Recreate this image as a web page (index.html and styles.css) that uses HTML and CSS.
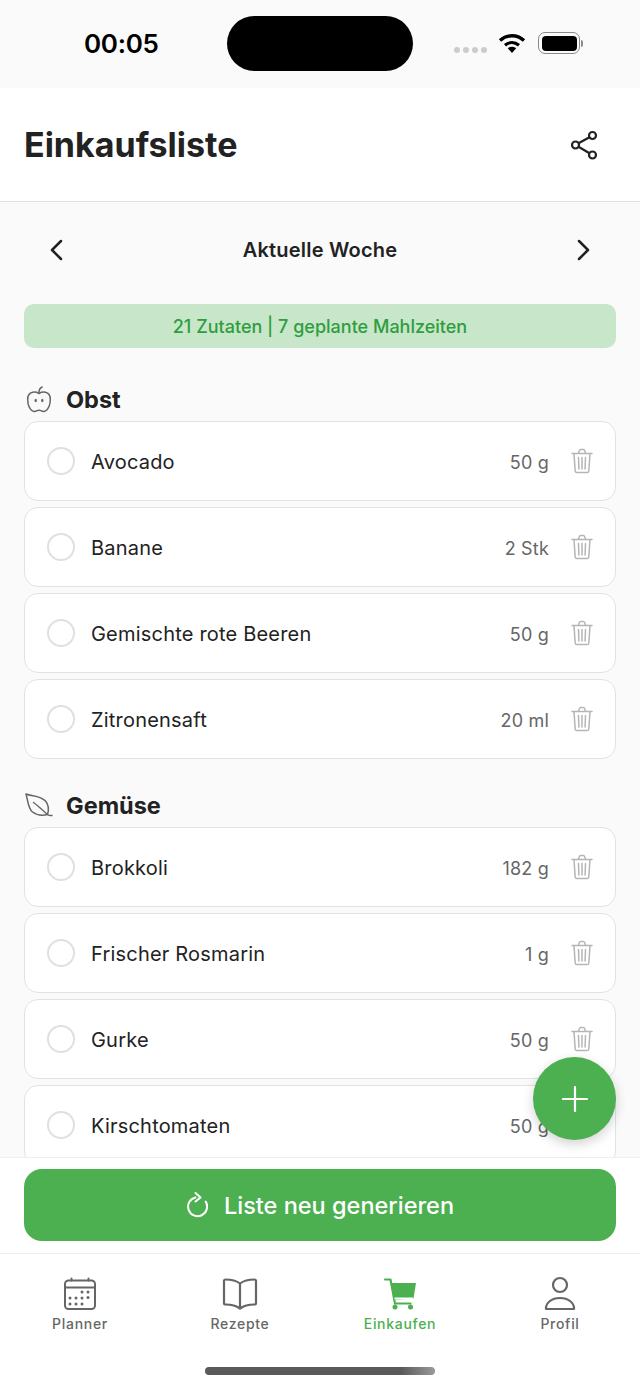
FILE: index.html
```html
<!DOCTYPE html>
<html lang="de">
<head>
<meta charset="utf-8">
<title>Einkaufsliste</title>
<link rel="stylesheet" href="styles.css">
</head>
<body>
<svg class="sprite" aria-hidden="true">
  <symbol id="trash" viewBox="0 0 22 26">
    <path d="M1 5.500h20M7.500 5.200 8.300 2.600c.2-.7.7-1.100 1.400-1.100h2.600c.7 0 1.200.4 1.400 1.100l.8 2.600M3 5.800l1.200 17.200c.1 1 .8 1.600 1.700 1.600h10.200c.9 0 1.600-.6 1.700-1.600L19 5.800M7.500 9.500l.4 11.500M11 9.500V21M14.500 9.500 14.100 21" fill="none" stroke="currentColor" stroke-width="1.500" stroke-linecap="round" stroke-linejoin="round"/>
  </symbol>
</svg>
<div class="app">
  <div class="status">
    <span class="time">00:05</span>
    <span class="island"></span>
    <div class="status-icons">
      <span class="signal"><i></i><i></i><i></i><i></i></span>
      <svg class="wifi" width="28" height="20" viewBox="0 0 28 20">
        <path d="M2 7.500C9 1.200 19 1.200 26 7.500" fill="none" stroke="#000" stroke-width="3.400"/>
        <path d="M7 12.300c4.200-3.600 9.800-3.600 14 0" fill="none" stroke="#000" stroke-width="3.200"/>
        <path d="M9.800 15.200c2.500-2 5.900-2 8.400 0L14 20z" fill="#000"/>
      </svg>
      <span class="battery"><b></b></span><span class="battery-tip"></span>
    </div>
  </div>

  <header class="header">
    <h1>Einkaufsliste</h1>
    <svg width="28" height="30" viewBox="0 0 28 30" class="share">
      <g fill="none" stroke="#222" stroke-width="2.200">
        <circle cx="22.500" cy="5.500" r="3.500"/>
        <circle cx="5.500" cy="15" r="3.500"/>
        <circle cx="22.500" cy="25" r="3.500"/>
        <path d="M8.500 13.300 19.500 7.200M8.500 16.800l11 6.400"/>
      </g>
    </svg>
  </header>

  <main class="content">
    <div class="week">
      <svg width="16" height="24" viewBox="0 0 16 24"><path d="M13 3 4 12l9 9" fill="none" stroke="#222" stroke-width="2.500" stroke-linecap="round" stroke-linejoin="round"/></svg>
      <span>Aktuelle Woche</span>
      <svg width="16" height="24" viewBox="0 0 16 24"><path d="m3 3 9 9-9 9" fill="none" stroke="#222" stroke-width="2.500" stroke-linecap="round" stroke-linejoin="round"/></svg>
    </div>
    <div class="banner">21 Zutaten | 7 geplante Mahlzeiten</div>

    <section class="section">
      <h2 class="section-title">
        <svg class="cat" width="30" height="30" viewBox="0 0 30 30">
          <g fill="none" stroke="#666" stroke-width="1.500" stroke-linecap="round" stroke-linejoin="round">
            <path d="M15 8.500c-2-1.200-4-1.700-6.300-1.200C5.200 8 3.500 11 3.700 15c.2 4.500 1.800 9 4.700 10.800 1.700 1 3.300.6 4.600-.2 1.300-.6 2.700-.6 4 0 1.300.8 2.900 1.200 4.600.2 2.900-1.800 4.500-6.300 4.700-10.800.2-4-1.500-7-5-7.700-2.300-.5-4.300 0-6.300 1.200z"/>
            <path d="M15 7.500c0-2.600 1-4.500 3.200-5.500"/>
          </g>
          <ellipse cx="11.700" cy="15.500" rx="1.200" ry="1.800" fill="#666"/>
          <ellipse cx="18.300" cy="15.500" rx="1.200" ry="1.800" fill="#666"/>
        </svg>
        Obst
      </h2>
      <div class="list">
        <div class="item"><span class="check"></span><span class="name">Avocado</span><span class="qty">50 g</span><svg class="trash" width="22" height="26"><use href="#trash"/></svg></div>
        <div class="item"><span class="check"></span><span class="name">Banane</span><span class="qty">2 Stk</span><svg class="trash" width="22" height="26"><use href="#trash"/></svg></div>
        <div class="item"><span class="check"></span><span class="name">Gemischte rote Beeren</span><span class="qty">50 g</span><svg class="trash" width="22" height="26"><use href="#trash"/></svg></div>
        <div class="item"><span class="check"></span><span class="name">Zitronensaft</span><span class="qty">20 ml</span><svg class="trash" width="22" height="26"><use href="#trash"/></svg></div>
      </div>
    </section>

    <section class="section">
      <h2 class="section-title">
        <svg class="cat" width="30" height="30" viewBox="0 0 30 30">
          <g fill="none" stroke="#666" stroke-width="1.500" stroke-linecap="round" stroke-linejoin="round">
            <path d="M2 3c6 2.500 14 1 19.500 7 3 3.500 3.500 8.500 2 13.500-5.500 1.500-11 .5-15-2.500C4 17.500 4 9.500 2 3z"/>
            <path d="M9.500 11.500c4 3 9 7.500 14 12 1 .8 3 1.200 4.500 1"/>
          </g>
        </svg>
        Gemüse
      </h2>
      <div class="list">
        <div class="item"><span class="check"></span><span class="name">Brokkoli</span><span class="qty">182 g</span><svg class="trash" width="22" height="26"><use href="#trash"/></svg></div>
        <div class="item"><span class="check"></span><span class="name">Frischer Rosmarin</span><span class="qty">1 g</span><svg class="trash" width="22" height="26"><use href="#trash"/></svg></div>
        <div class="item"><span class="check"></span><span class="name">Gurke</span><span class="qty">50 g</span><svg class="trash" width="22" height="26"><use href="#trash"/></svg></div>
        <div class="item"><span class="check"></span><span class="name">Kirschtomaten</span><span class="qty">50 g</span><svg class="trash" width="22" height="26"><use href="#trash"/></svg></div>
      </div>
    </section>
  </main>

  <button class="fab" aria-label="Hinzufügen">
    <svg width="28" height="28" viewBox="0 0 28 28"><path d="M14 2v24M2 14h24" stroke="#fff" stroke-width="2.200" stroke-linecap="round"/></svg>
  </button>

  <div class="action">
    <button class="generate">
      <svg width="22" height="26" viewBox="1 0 22 26"><path d="M15.500 5.200A9.500 9.500 0 1 1 5 8.500" fill="none" stroke="#fff" stroke-width="2" stroke-linecap="round" transform="rotate(40 12 14.500)"/><path d="M10.500 1 15.500 5.500 10.500 9.500" fill="none" stroke="#fff" stroke-width="2" stroke-linecap="round" stroke-linejoin="round"/></svg>
      Liste neu generieren
    </button>
  </div>

  <nav class="tabs">
    <div class="tab">
      <svg width="36" height="36" viewBox="0 0 36 36">
        <g fill="none" stroke="#666" stroke-width="2" stroke-linecap="round">
          <rect x="3" y="4.500" width="30" height="28.500" rx="3.500"/>
          <path d="M3 11.500h30M9.500 2.500V4.500M26.500 2.500V4.500"/>
        </g>
        <g fill="#666">
          <circle cx="20" cy="16" r="1.500"/><circle cx="26" cy="16" r="1.500"/>
          <circle cx="8" cy="22" r="1.500"/><circle cx="14" cy="22" r="1.500"/><circle cx="20" cy="22" r="1.500"/><circle cx="26" cy="21.500" r="1.500"/>
          <circle cx="8" cy="28" r="1.500"/><circle cx="14" cy="28" r="1.500"/><circle cx="20" cy="28" r="1.500"/>
        </g>
      </svg>
      <span>Planner</span>
    </div>
    <div class="tab">
      <svg width="36" height="36" viewBox="0 0 36 36">
        <path d="M18 7.500C14.500 4.800 9 3.500 3.500 3.500c-1 0-1.500.5-1.500 1.500v22c0 1 .5 1.500 1.500 1.500 5.500 0 10.500 1 14.500 4 4-3 9-4 14.500-4 1 0 1.500-.5 1.500-1.500V5c0-1-.5-1.500-1.500-1.500-5.500 0-11 1.300-14.500 4zM18 7.500V32" fill="none" stroke="#666" stroke-width="2.200" stroke-linejoin="round"/>
      </svg>
      <span>Rezepte</span>
    </div>
    <div class="tab active">
      <svg width="36" height="36" viewBox="0 0 36 36">
        <path d="M3 3.500h5.500l4.500 24h15.500" fill="none" stroke="#4caf50" stroke-width="2.200" stroke-linecap="round" stroke-linejoin="round"/>
        <path d="M9 7h25l-2.500 15.500-20 1.500z" fill="#4caf50"/>
        <path d="M12.500 22.500h18.500" stroke="#fff" stroke-width="2"/>
        <circle cx="13" cy="31" r="2.500" fill="#4caf50"/><circle cx="28.500" cy="31" r="2.500" fill="#4caf50"/>
      </svg>
      <span>Einkaufen</span>
    </div>
    <div class="tab">
      <svg width="36" height="36" viewBox="0 0 36 36">
        <g fill="none" stroke="#666" stroke-width="2.200" stroke-linejoin="round">
          <circle cx="18" cy="9" r="7"/>
          <path d="M4 33c-.5-6 5.500-11 14-11s14.500 5 14 11z"/>
        </g>
      </svg>
      <span>Profil</span>
    </div>
  </nav>
  <div class="home-area"><span class="home-bar"></span></div>
</div>
</body>
</html>
```
FILE: styles.css
```css
* { box-sizing: border-box; margin: 0; padding: 0; }
html, body { height: 100%; overflow: hidden; }
body { font-family: Inter, "Liberation Sans", sans-serif; color: #222; background: #fafafa; }
.sprite { display: none; }
.app { position: relative; width: 640px; height: 1387px; display: flex; flex-direction: column; overflow: hidden; background: #fafafa; }

.status { height: 88px; flex: none; display: flex; align-items: flex-start; background: #fafafa; position: relative; }
.time { margin: 28px 0 0 84px; font-size: 26px; line-height: 32px; font-weight: 600; color: #000; width: 143px; letter-spacing: -0.300px; }
.island { width: 186px; height: 55px; margin-top: 16px; background: #000; border-radius: 28px; }
.status-icons { display: flex; margin: 32px 0 0 41px; align-items: center; }
.signal { display: flex; gap: 3px; margin-top: 13px; margin-right: 11px; }
.signal i { width: 6px; height: 6px; border-radius: 50%; background: #ccc; }
.wifi { margin-top: -1px; margin-right: 12px; }
.battery { width: 42px; height: 22px; padding: 2.500px; border: 1.500px solid #8a8a8a; border-radius: 7px; display: block; }
.battery b { display: block; height: 100%; background: #000; border-radius: 4px; }
.battery-tip { width: 2px; height: 7px; margin-left: 1px; background: #8a8a8a; border-radius: 0 2px 2px 0; }

.header { height: 114px; flex: none; display: flex; align-items: center; justify-content: space-between; padding: 0 42px 0 24px; background: #fff; border-bottom: 1.500px solid #e0e0e0; }
.header h1 { font-size: 34px; line-height: 40px; font-weight: 700; color: #222; }

.content { flex: 1; min-height: 0; overflow: hidden; padding: 0 24px; }
.week { height: 48px; margin-top: 24px; display: flex; align-items: center; justify-content: space-between; padding: 0 24px; font-size: 20px; font-weight: 600; color: #222; letter-spacing: .2px; }
.banner { margin-top: 30px; height: 44px; display: flex; align-items: center; justify-content: center; background: #c8e6c9; border-radius: 10px; color: #2e9e3e; font-size: 18px; font-weight: 500; }

.section { margin-top: 31px; }
.section + .section { margin-top: 26px; }
.section-title { height: 42px; display: flex; align-items: center; gap: 12px; font-size: 23.500px; font-weight: 700; color: #222; line-height: 30px; }
.cat { flex: none; }
.list { display: flex; flex-direction: column; gap: 6px; }

.item { height: 80px; display: flex; align-items: center; padding: 0 22px; background: #fff; border: 1.500px solid #e2e2e2; border-radius: 14px; }
.check { width: 28px; height: 28px; flex: none; border: 2px solid #e0e0e0; border-radius: 50%; margin-right: 16px; }
.name { flex: 1; font-size: 20px; color: #222; letter-spacing: .2px; padding-top: 2px; }
.qty { font-size: 18px; color: #666; margin-right: 22px; letter-spacing: .2px; padding-top: 2px; }
.trash { flex: none; color: #b5b5b5; }

.fab { position: absolute; left: 533px; top: 1057px; width: 83px; height: 83px; border: 0; border-radius: 50%; background: #4caf50; display: flex; align-items: center; justify-content: center; box-shadow: 0 4px 12px rgba(0,0,0,.18); }

.action { flex: none; height: 97px; padding: 11px 24px; background: #fff; border-top: 1px solid #eee; border-bottom: 1px solid #eee; }
.generate { width: 100%; height: 72px; border: 0; border-radius: 18px; background: #4caf50; color: #fff; font-family: inherit; font-size: 23.500px; font-weight: 500; display: flex; align-items: center; justify-content: center; gap: 16px; }

.tabs { flex: none; height: 91px; display: grid; grid-template-columns: repeat(4, 1fr); background: #fff; padding-top: 22px; }
.tab { display: flex; flex-direction: column; align-items: center; gap: 3px; font-size: 14px; font-weight: 500; color: #666; line-height: 18px; letter-spacing: .7px; }
.tab.active { color: #4caf50; }
.home-area { flex: none; height: 42px; background: #fff; display: flex; justify-content: center; padding-top: 22px; }
.home-bar { width: 230px; height: 8px; border-radius: 4px; background: linear-gradient(90deg, #5a5a5a 85%, #9a9a9a); }
```
